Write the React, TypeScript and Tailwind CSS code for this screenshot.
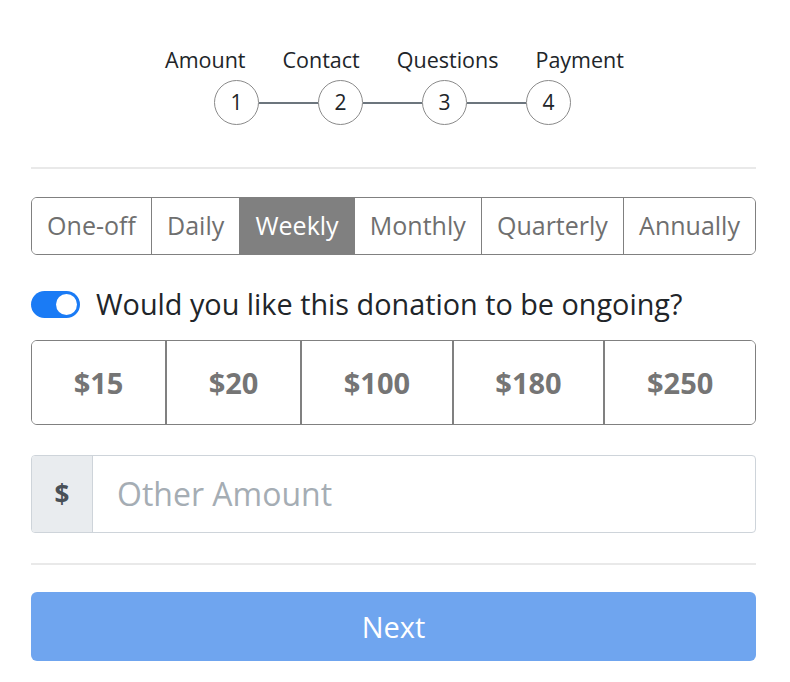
import { useState } from "react";

const steps = ["Amount", "Contact", "Questions", "Payment"];
const frequencies = ["One-off", "Daily", "Weekly", "Monthly", "Quarterly", "Annually"];
const amounts = ["$15", "$20", "$100", "$180", "$250"];

export default function App() {
  const [frequency, setFrequency] = useState("Weekly");
  const [ongoing, setOngoing] = useState(true);
  const [amount, setAmount] = useState<string | null>(null);
  const [other, setOther] = useState("");

  return (
    <div
      className="min-h-screen bg-white text-[#212529]"
      style={{ fontFamily: '"Open Sans", "Liberation Sans", sans-serif' }}
    >
      <div className="ml-[31px] w-[725px] pt-[45px] pb-[20px]">
        {/* stepper */}
        <div className="flex justify-center gap-[37px] pl-[2px] text-[21.5px] leading-[29px]">
          {steps.map((step) => (
            <span key={step}>{step}</span>
          ))}
        </div>
        <div className="mt-[6px] flex items-center justify-center pr-[2px]">
          {steps.map((step, i) => (
            <div key={step} className="flex items-center">
              {i > 0 && <div className="h-[2px] w-[59px] bg-[#6c757d]" />}
              <div className="flex h-[45px] w-[45px] items-center justify-center rounded-full border border-[#8a8a8a] text-[21px]">
                {i + 1}
              </div>
            </div>
          ))}
        </div>

        <hr className="mt-[42px] border-t-2 border-[#e9e9e9]" />

        {/* frequency */}
        <div className="mt-[28px] flex h-[58px] overflow-hidden rounded-[6px] border border-[#808080]">
          {frequencies.map((f, i) => (
            <button
              key={f}
              onClick={() => setFrequency(f)}
              className={`flex flex-auto items-center justify-center px-[13px] text-[25px] ${
                i > 0 ? "border-l border-[#808080]" : ""
              } ${frequency === f ? "bg-[#808080] text-white" : "bg-white text-[#6f6f6f]"}`}
            >
              {f}
            </button>
          ))}
        </div>

        {/* ongoing toggle */}
        <div className="mt-[30px] flex h-[38px] items-center gap-[16px]">
          <button
            onClick={() => setOngoing(!ongoing)}
            className={`relative h-[27px] w-[49px] shrink-0 rounded-full ${
              ongoing ? "bg-[#1a7bf5]" : "border border-[#adb5bd] bg-white"
            }`}
          >
            <span
              className={`absolute top-[3px] h-[21px] w-[21px] rounded-full bg-white ${
                ongoing ? "right-[3px]" : "left-[3px] bg-[#adb5bd]"
              }`}
            />
          </button>
          <span className="text-[28.8px] leading-[38px]">Would you like this donation to be ongoing?</span>
        </div>

        {/* amounts */}
        <div className="mt-[17px] flex h-[85px] overflow-hidden rounded-[6px] border border-[#808080]">
          {amounts.map((a, i) => (
            <button
              key={a}
              onClick={() => setAmount(a)}
              className={`flex flex-auto items-center justify-center text-[29px] font-bold ${
                i > 0 ? "border-l-2 border-[#808080]" : ""
              } ${amount === a ? "bg-[#808080] text-white" : "bg-white text-[#757575]"}`}
            >
              {a}
            </button>
          ))}
        </div>

        {/* other amount */}
        <div className="mt-[30px] flex h-[78px] overflow-hidden rounded-[4px] border border-[#ced4da]">
          <div className="flex w-[61px] shrink-0 items-center justify-center border-r border-[#ced4da] bg-[#e9ecef] text-[26px] font-bold text-[#495057]">
            $
          </div>
          <input
            value={other}
            onChange={(e) => setOther(e.target.value)}
            placeholder="Other Amount"
            className="min-w-0 flex-1 px-[24px] text-[32px] text-[#495057] outline-none placeholder:text-[#a5adb4]"
          />
        </div>

        <hr className="mt-[30px] border-t-2 border-[#e9e9e9]" />

        <button className="mt-[27px] flex h-[69px] w-full items-center justify-center rounded-[6px] bg-[#6fa5ef] text-[29px] text-white">
          Next
        </button>
      </div>
    </div>
  );
}
